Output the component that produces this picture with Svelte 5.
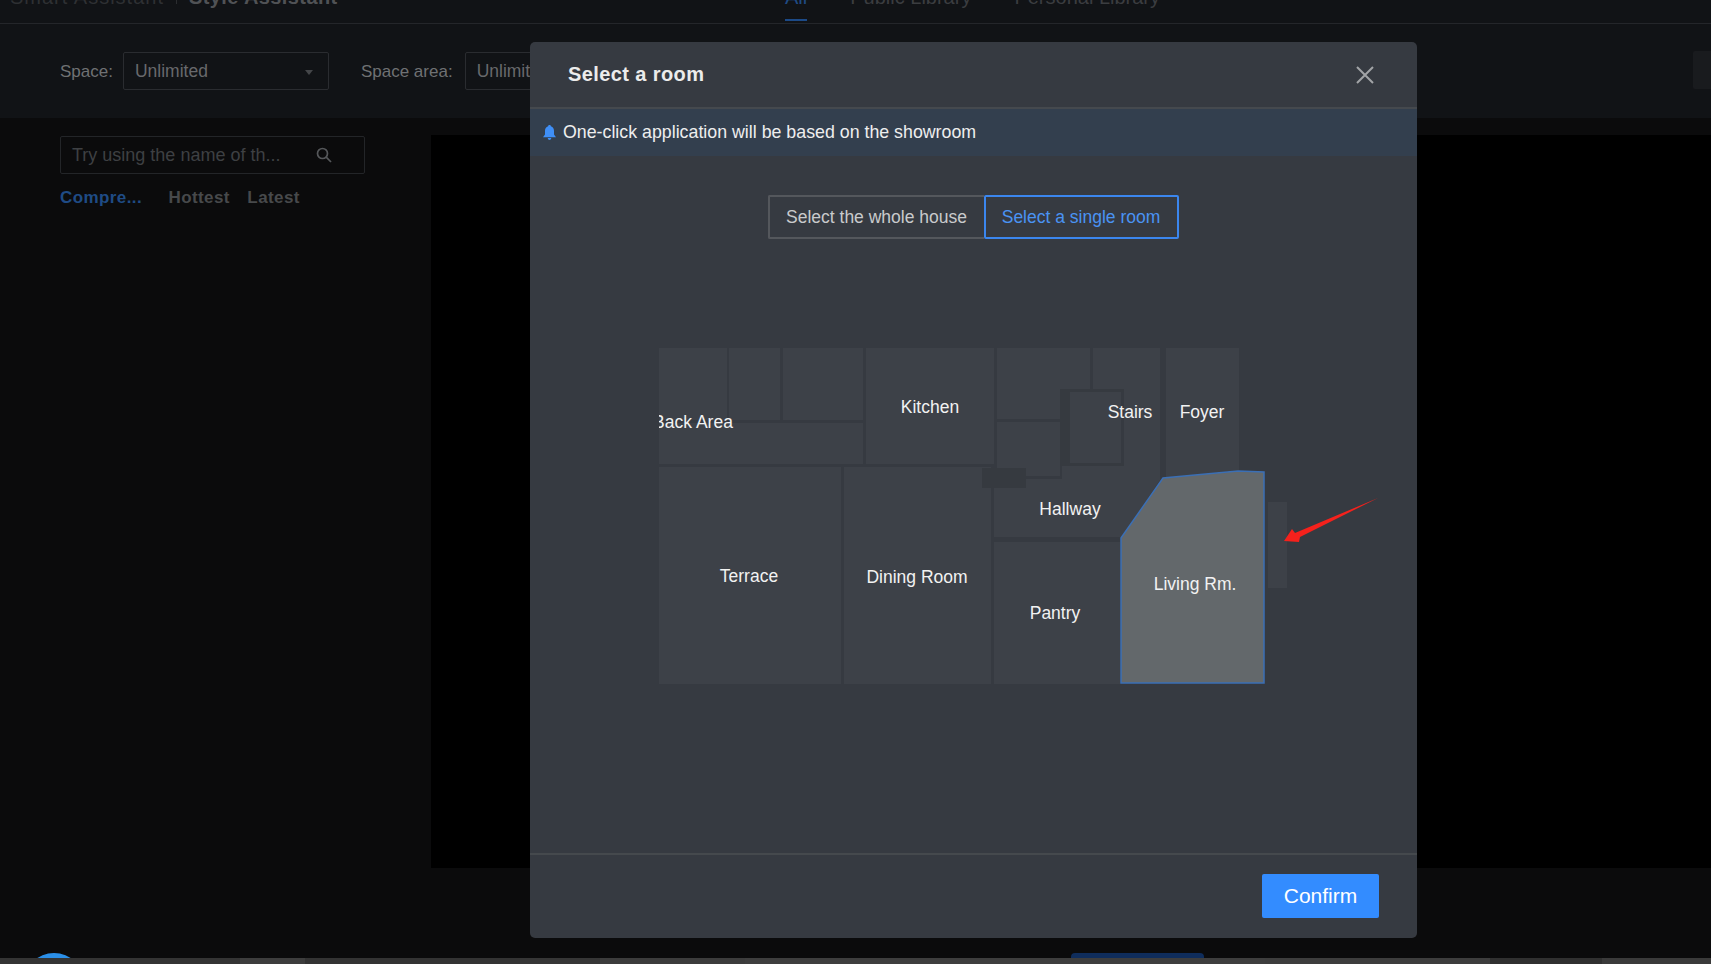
<script lang="ts">
  const tabs = ['Select the whole house', 'Select a single room'];
  let activeTab = 1;

  // floor plan, viewBox uses the same units as the page
  const rooms = [
    '659,348 727,348 727,420 659,420',
    '729,348 780,348 780,420 729,420',
    '783,348 863,348 863,420 783,420',
    '659,423 863,423 863,464 659,464',
    '866,348 994,348 994,464 866,464',
    '659,467 841,467 841,684 659,684',
    '844,467 991,467 991,684 844,684',
    '997,348 1090,348 1090,419 997,419',
    '997,422 1060,422 1060,476 997,476',
    '1070,392 1121,392 1121,463 1070,463',
    '1093,348 1160,348 1160,480 1122,537 994,537 994,488 1026,488 1026,479 1062,479 1062,466 1124,466 1124,390 1093,390',
    '1166,348 1239,348 1239,470 1166,478',
    '994,542 1120,542 1120,684 994,684',
    '1268,502 1287,502 1287,588 1268,588'
  ];
  const labels = [
    { text: 'Back Area', x: 693, y: 422 },
    { text: 'Kitchen', x: 930, y: 407 },
    { text: 'Stairs', x: 1130, y: 412 },
    { text: 'Foyer', x: 1202, y: 412 },
    { text: 'Hallway', x: 1070, y: 509 },
    { text: 'Terrace', x: 749, y: 576 },
    { text: 'Dining Room', x: 917, y: 577 },
    { text: 'Pantry', x: 1055, y: 613 },
    { text: 'Living Rm.', x: 1195, y: 584 }
  ];
  const strip = [
    [240, '#343434'], [65, '#3d3d3d'], [215, '#333333'], [80, '#363636'], [145, '#3c3c3c'],
    [520, '#3e3e3e'], [225, '#3d3d3d'], [112, '#303030'], [109, '#3a3a3a']
  ];
</script>

<div class="page">
  <header class="topbar">
    <div class="crumbs"><span class="dim">Smart Assistant</span><i></i><span class="strong">Style Assistant</span></div>
    <nav class="nav">
      <span class="on">All</span>
      <span>Public Library</span>
      <span>Personal Library</span>
    </nav>
  </header>

  <div class="filters">
    <span class="lbl">Space:</span>
    <div class="select first">Unlimited<b class="caret"></b></div>
    <span class="lbl wide">Space area:</span>
    <div class="select">Unlimited</div>
    <div class="corner"></div>
  </div>

  <div class="content">
    <aside class="side">
      <div class="search">
        <span>Try using the name of th...</span>
        <svg width="16" height="16" viewBox="0 0 16 16" fill="none" stroke="#55575a" stroke-width="1.7"><circle cx="6.5" cy="6.5" r="5"/><path d="M10.2 10.2 15 15"/></svg>
      </div>
      <div class="sort">
        <span class="cur">Compre...</span>
        <span>Hottest</span>
        <span>Latest</span>
      </div>
    </aside>
    <div class="stage"></div>
  </div>

  <div class="bottom">
    <div class="ball"></div>
    <div class="pill"></div>
  </div>
  <div class="strip">
    {#each strip as s}
      <div style="width: {s[0]}px; background: {s[1]}"></div>
    {/each}
  </div>

  <section class="modal">
    <div class="m-head">
      <h2>Select a room</h2>
      <svg width="18" height="18" viewBox="0 0 18 18" stroke="#a2a4a7" stroke-width="2"><path d="M1 1 17 17M17 1 1 17"/></svg>
    </div>
    <div class="notice">
      <svg width="13" height="15" viewBox="0 0 13 15" fill="#3f8ff7"><path d="M6.5 0C7.3 0 7.8.5 7.9 1.2 10 1.8 11 3.500 11 5.800V9.500L13 12.200H0L2 9.500V5.800C2 3.500 3 1.800 5.100 1.200 5.200.5 5.700 0 6.500 0ZM4.700 13H8.300C8.100 14.200 7.400 15 6.500 15S4.900 14.200 4.700 13Z"/></svg>
      <span>One-click application will be based on the showroom</span>
    </div>

    <div class="m-body">
      <div class="seg">
        {#each tabs as t, i}
          <button class:active={i === activeTab} on:click={() => (activeTab = i)}>{t}</button>
        {/each}
      </div>

      <svg class="plan" width="720" height="340" viewBox="659 348 720 340">
        {#each rooms as r}
          <polygon points={r} fill="#3d4148" />
        {/each}
        <rect x="982" y="468" width="44" height="20" fill="#363a40" />
        <polygon points="1060,389 1124,389 1124,392 1070,392 1070,463 1124,463 1124,466 1060,466" fill="#363a40" />
        <polygon points="1121,538 1163,478 1238,471 1264,472 1264,683 1121,683" fill="#63686b" stroke="#3b6fb5" stroke-width="1.500" />
        {#each labels as l}
          <text x={l.x} y={l.y} text-anchor="middle" dominant-baseline="central">{l.text}</text>
        {/each}
        <polygon points="1284,541 1292,529 1295,533 1378,498 1300,537 1299,542" fill="#f5211c" />
      </svg>
    </div>

    <div class="m-foot">
      <button class="confirm">Confirm</button>
    </div>
  </section>
</div>

<style>
  :global(body) { margin: 0; background: #0b0b0c; }
  .page {
    position: relative;
    width: 1711px;
    height: 964px;
    overflow: hidden;
    display: flex;
    flex-direction: column;
    background: #0b0b0c;
    font-family: "Liberation Sans", Arial, sans-serif;
  }

  .topbar {
    height: 24px;
    flex: none;
    display: flex;
    align-items: flex-end;
    padding: 0 0 15px 10px;
    box-sizing: border-box;
    background: #111316;
    border-bottom: 1px solid #24262a;
    font-size: 20px;
    line-height: 22px;
    position: relative;
  }
  .crumbs { display: flex; align-items: center; width: 774px; flex: none; }
  .crumbs i { width: 1px; height: 14px; background: #2b2d30; margin: 0 12px; }
  .dim { color: #2e3033; letter-spacing: 1px; }
  .strong { color: #505255; font-weight: 700; letter-spacing: 0.4px; }
  .nav { display: flex; gap: 43px; color: #3b3d40; font-size: 20px; margin-left: 1px; }
  .nav .on { color: #1f4b85; position: relative; }
  .nav .on::after { content: ''; position: absolute; left: 0; right: 0; bottom: -13px; height: 2px; background: #1c4a87; }

  .filters {
    height: 94px;
    flex: none;
    display: flex;
    align-items: center;
    padding: 0 0 0 60px;
    box-sizing: border-box;
    background: #111316;
    font-size: 17px;
    position: relative;
  }
  .lbl { color: #6f7173; margin: 2px 10px 0 0; }
  .lbl.wide { margin-right: 12px; }
  .select {
    position: relative;
    height: 38px;
    width: 206px;
    box-sizing: border-box;
    border: 1px solid #2a2c30;
    border-radius: 2px;
    padding: 0 11px;
    line-height: 36px;
    font-size: 17.5px;
    color: #68696c;
  }
  .select.first { margin-right: 32px; }
  .caret {
    position: absolute;
    right: 15px;
    top: 17px;
    border: 4px solid transparent;
    border-top: 5px solid #444649;
    border-bottom: 0;
  }
  .corner {
    position: absolute;
    right: 0;
    top: 27px;
    width: 18px;
    height: 38px;
    background: #191b1e;
    border-radius: 2px 0 0 2px;
  }

  .content { display: flex; height: 750px; flex: none; }
  .side { width: 431px; flex: none; padding: 18px 0 0 60px; box-sizing: border-box; }
  .search {
    width: 305px;
    height: 38px;
    box-sizing: border-box;
    border: 1px solid #232528;
    border-radius: 2px;
    display: flex;
    align-items: center;
    justify-content: space-between;
    padding: 0 32px 0 11px;
    color: #3e4043;
    font-size: 18px;
  }
  .sort { display: flex; gap: 17.5px; margin-top: 14px; font-size: 17px; font-weight: 700; letter-spacing: 0.4px; color: #47494b; }
  .sort .cur { color: #1f4b85; width: 91px; }
  .stage { flex: 1; margin-top: 17px; height: 733px; background: #000; }

  .bottom { flex: 1; position: relative; }
  .ball { position: absolute; left: 24px; top: 85px; width: 60px; height: 60px; border-radius: 50%; background: #2b8fe8; }
  .pill { position: absolute; left: 1071px; top: 85px; width: 133px; height: 30px; border-radius: 4px; background: #0f2d5c; }
  .strip { position: absolute; left: 0; right: 0; bottom: 0; height: 6px; display: flex; }

  .modal {
    position: absolute;
    left: 530px;
    top: 42px;
    width: 887px;
    height: 896px;
    display: flex;
    flex-direction: column;
    background: #363a41;
    border-radius: 5px;
    color: #e8e9ea;
  }
  .m-head {
    height: 65px;
    flex: none;
    display: flex;
    align-items: center;
    justify-content: space-between;
    padding: 0 43px 0 38px;
    border-bottom: 2px solid #45494e;
  }
  .m-head h2 { margin: 0; font-size: 20px; font-weight: 700; color: #ececec; letter-spacing: 0.4px; }
  .notice {
    height: 47px;
    flex: none;
    display: flex;
    align-items: center;
    gap: 7px;
    padding-left: 13px;
    background: #333f4e;
    font-size: 17.8px;
    color: #eeeeee;
  }
  .m-body { flex: 1; display: flex; flex-direction: column; min-height: 0; }
  .seg { display: flex; justify-content: center; margin-top: 39px; padding-right: 1px; }
  .seg button {
    height: 44px;
    padding: 0;
    width: 216px;
    background: transparent;
    border: 2px solid #54575c;
    border-right: 0;
    border-radius: 2px 0 0 2px;
    color: #c9cacc;
    font: 17.5px "Liberation Sans", Arial, sans-serif;
  }
  .seg button.active {
    width: 195px;
    border: 2px solid #3b86ee;
    border-radius: 2px;
    color: #4a93f3;
  }
  .plan { display: block; margin: 109px 0 0 129px; }
  .plan text { fill: #f2f2f2; font-size: 17.5px; }
  .m-foot {
    height: 85px;
    flex: none;
    box-sizing: border-box;
    border-top: 2px solid #45494d;
    display: flex;
    justify-content: flex-end;
    padding: 19px 38px 0 0;
  }
  .confirm {
    width: 117px;
    height: 44px;
    border: 0;
    border-radius: 2px;
    background: #338cff;
    color: #fff;
    font: 21px "Liberation Sans", Arial, sans-serif;
  }
</style>
